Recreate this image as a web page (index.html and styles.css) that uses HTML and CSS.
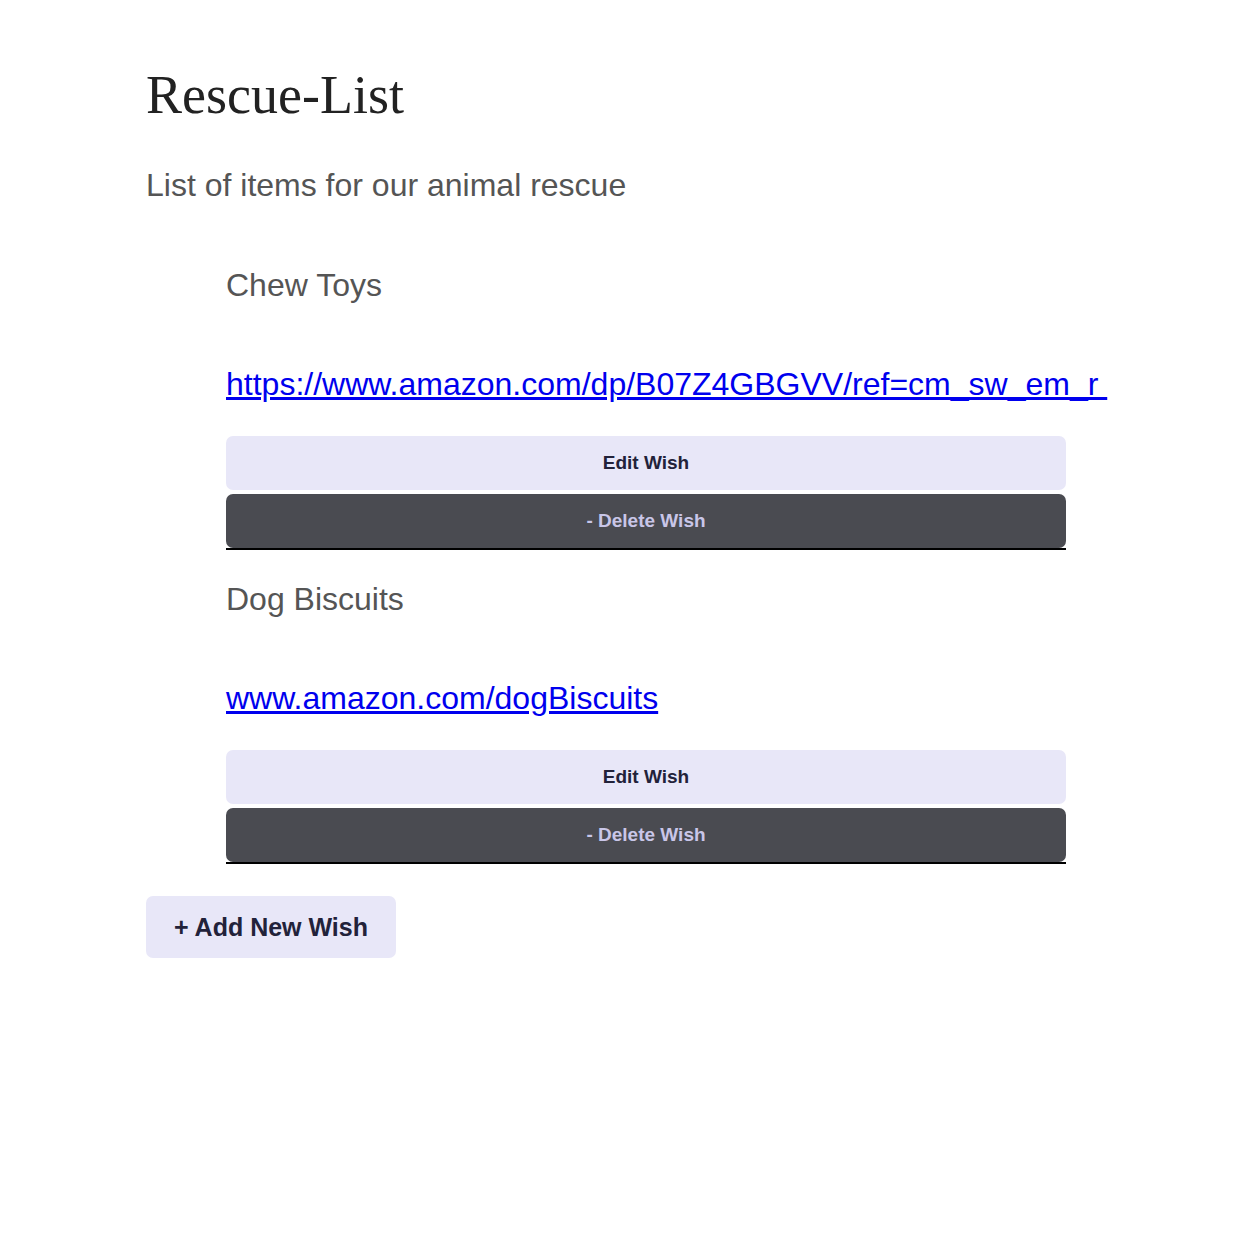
FILE: index.html
```html
<!DOCTYPE html>
<html>
<head>
<meta charset="utf-8">
<title>Rescue-List</title>
<link rel="stylesheet" href="styles.css">
</head>
<body>
<main class="page">
  <h1 class="title">Rescue-List</h1>
  <p class="subtitle">List of items for our animal rescue</p>
  <ul class="wishes">
    <li class="wish">
      <p class="wish-name">Chew Toys</p>
      <p class="wish-link"><a href="#">https://www.amazon.com/dp/B07Z4GBGVV/ref=cm_sw_em_r&nbsp;</a></p>
      <button class="btn-edit">Edit Wish</button>
      <button class="btn-delete">- Delete Wish</button>
    </li>
    <li class="wish">
      <p class="wish-name">Dog Biscuits</p>
      <p class="wish-link"><a href="#">www.amazon.com/dogBiscuits</a></p>
      <button class="btn-edit">Edit Wish</button>
      <button class="btn-delete">- Delete Wish</button>
    </li>
  </ul>
  <button class="btn-add">+ Add New Wish</button>
</main>
</body>
</html>
```

FILE: styles.css
```css
html, body {
  margin: 0;
  padding: 0;
  background: #ffffff;
}

.page {
  width: 960px;
  margin: 0 auto;
  padding: 64px 0 0 1px;
  box-sizing: border-box;
  font-family: "Liberation Sans", Arial, sans-serif;
}

.title {
  margin: 0;
  font-family: "Liberation Serif", "Times New Roman", serif;
  font-weight: 400;
  font-size: 54px;
  line-height: 62px;
  color: #222222;
}

.subtitle {
  margin: 41px 0 0;
  font-size: 32px;
  line-height: 37px;
  color: #555555;
}

.wishes {
  list-style: none;
  margin: 0;
  padding: 0 0 0 80px;
}

.wish {
  display: flex;
  flex-direction: column;
  width: 840px;
  border-bottom: 2px solid #000000;
  padding-top: 31px;
}

.wish:first-child {
  padding-top: 63px;
}

.wish-name {
  margin: 0;
  font-size: 32px;
  line-height: 37px;
  color: #555555;
}

.wish-link {
  margin: 62px 0 0;
  font-size: 32px;
  line-height: 37px;
  white-space: nowrap;
}

.wish-link a {
  color: #0000ee;
  text-decoration: underline;
}

.btn-edit,
.btn-delete {
  display: block;
  width: 100%;
  height: 54px;
  border: none;
  border-radius: 7px;
  font-family: "Liberation Sans", Arial, sans-serif;
  font-weight: 700;
  font-size: 19px;
  cursor: pointer;
}

.btn-edit {
  margin-top: 33px;
  background: #e8e7f8;
  color: #22223a;
}

.btn-delete {
  margin-top: 4px;
  background: #4a4b51;
  color: #c9c6e8;
}

.btn-add {
  margin-top: 32px;
  width: 250px;
  height: 62px;
  border: none;
  border-radius: 7px;
  background: #e8e7f8;
  color: #22223a;
  font-family: "Liberation Sans", Arial, sans-serif;
  font-weight: 700;
  font-size: 25px;
  cursor: pointer;
}
```
